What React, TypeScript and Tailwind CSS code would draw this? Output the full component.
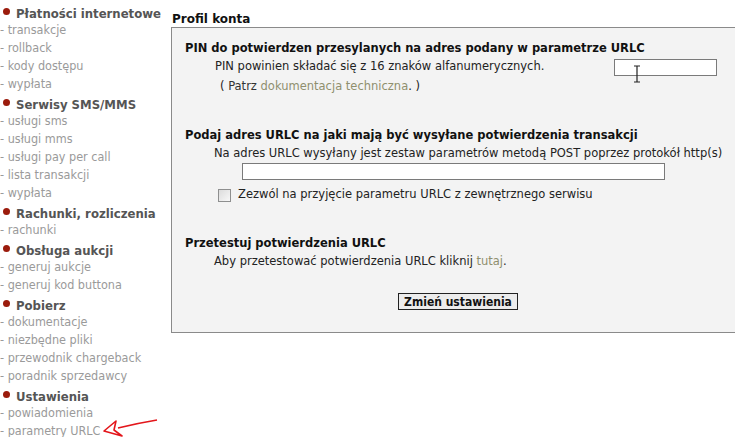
import React from "react";

const sideFont = { fontFamily: '"DejaVu Sans Condensed", "DejaVu Sans", sans-serif' };
const mainFont = { fontFamily: '"DejaVu Sans", Verdana, sans-serif' };

type Section = { title: string; items: string[] };
const sections: Section[] = [
  { title: "Płatności internetowe", items: ["transakcje", "rollback", "kody dostępu", "wypłata"] },
  { title: "Serwisy SMS/MMS", items: ["usługi sms", "usługi mms", "usługi pay per call", "lista transakcji", "wypłata"] },
  { title: "Rachunki, rozliczenia", items: ["rachunki"] },
  { title: "Obsługa aukcji", items: ["generuj aukcje", "generuj kod buttona"] },
  { title: "Pobierz", items: ["dokumentacje", "niezbędne pliki", "przewodnik chargeback", "poradnik sprzedawcy"] },
  { title: "Ustawienia", items: ["powiadomienia", "parametry URLC"] },
];

function Sidebar() {
  return (
    <div className="w-[171px] shrink-0 pt-[7px]" style={sideFont}>
      {sections.map((s, i) => (
        <div key={s.title} className={i === 0 ? "" : "mt-[5px]"}>
          <div className="flex items-center h-[14px] text-[13px] font-bold text-[#555555] whitespace-nowrap">
            <span className="w-[7px] h-[7px] rounded-full bg-[#9b1b0c] ml-[3px] mr-[6px] -mt-[6px]" />
            <span>{s.title}</span>
          </div>
          {s.items.map((it, j) => (
            <div key={j} className="h-[18px] leading-[18px] text-[12.5px] text-[#9a9a9a] whitespace-nowrap">
              - {it}
            </div>
          ))}
        </div>
      ))}
    </div>
  );
}

export default function App() {
  return (
    <div className="relative w-[735px] h-[437px] overflow-hidden bg-white flex">
      <Sidebar />
      <div className="flex-1 flex flex-col pt-[12px]" style={mainFont}>
        <div className="text-[12px] font-bold text-[#111] leading-[15px] pl-[1px]">Profil konta</div>
        <div className="h-[306px] border-t border-l border-b border-[#8a8a8a] bg-[#f3f3f3] text-[11.5px] text-[#222] pl-[13px] pt-[12px]">
          <div className="text-[11.5px] font-bold text-[#111] leading-[16px] whitespace-nowrap">
            PIN do potwierdzen przesylanych na adres podany w parametrze URLC
          </div>
          <div className="flex items-center mt-[2px] h-[18px]">
            <div className="pl-[30px] w-[429px] whitespace-nowrap">PIN powinien składać się z 16 znaków alfanumerycznych.</div>
            <div className="w-[103px] h-[17px] border border-[#7a7a7a] bg-white" />
          </div>
          <div className="pl-[35px] mt-[1px] leading-[18px]">
            ( <span className="text-[#333]">Patrz</span> <span className="text-[#8f8f6e]">dokumentacja techniczna</span>. )
          </div>
          <div className="text-[11.5px] font-bold text-[#111] leading-[16px] mt-[32px] whitespace-nowrap">
            Podaj adres URLC na jaki mają być wysyłane potwierdzenia transakcji
          </div>
          <div className="pl-[29px] mt-[2px] leading-[16px] whitespace-nowrap">
            Na adres URLC wysyłany jest zestaw parametrów metodą POST poprzez protokół http(s)
          </div>
          <div className="pl-[57px] mt-[2px]">
            <div className="w-[423px] h-[17px] border border-[#7a7a7a] bg-white" />
          </div>
          <div className="flex items-center pl-[33px] mt-[8px] h-[14px]">
            <div className="w-[13px] h-[13px] border border-[#8e8f8f] bg-gradient-to-br from-[#dcdcdc] to-[#f8f8f8]" />
            <span className="ml-[7px] whitespace-nowrap">Zezwól na przyjęcie parametru URLC z zewnętrznego serwisu</span>
          </div>
          <div className="text-[11.5px] font-bold text-[#111] leading-[16px] mt-[33px]">
            Przetestuj potwierdzenia URLC
          </div>
          <div className="pl-[29px] mt-[2px] leading-[16px]">
            Aby przetestować potwierdzenia URLC kliknij <span className="text-[#8f8f6e]">tutaj</span>.
          </div>
          <div className="pl-[213px] mt-[24px]">
            <div
              className="w-[120px] h-[17px] border border-[#222] bg-[#ececec] flex items-center justify-center text-[12px] font-bold text-[#111] whitespace-nowrap"
              style={sideFont}
            >
              Zmień ustawienia
            </div>
          </div>
        </div>
      </div>
      <svg className="absolute left-0 top-0 pointer-events-none" width="735" height="437">
        <path d="M157 420 C 145 422, 130 425, 118 428" stroke="#e3161b" strokeWidth="1.6" fill="none" />
        <path d="M104 431 L116 421 L114 430 L122 436 Z" stroke="#e3161b" strokeWidth="1.6" fill="none" strokeLinejoin="round" />
      </svg>
      <svg className="absolute left-[632px] top-[65px] pointer-events-none" width="10" height="20">
        <path d="M2 1 L8 1 M5 1 L5 17 M2 17 L8 17" stroke="#222" strokeWidth="1.2" fill="none" />
      </svg>
    </div>
  );
}
